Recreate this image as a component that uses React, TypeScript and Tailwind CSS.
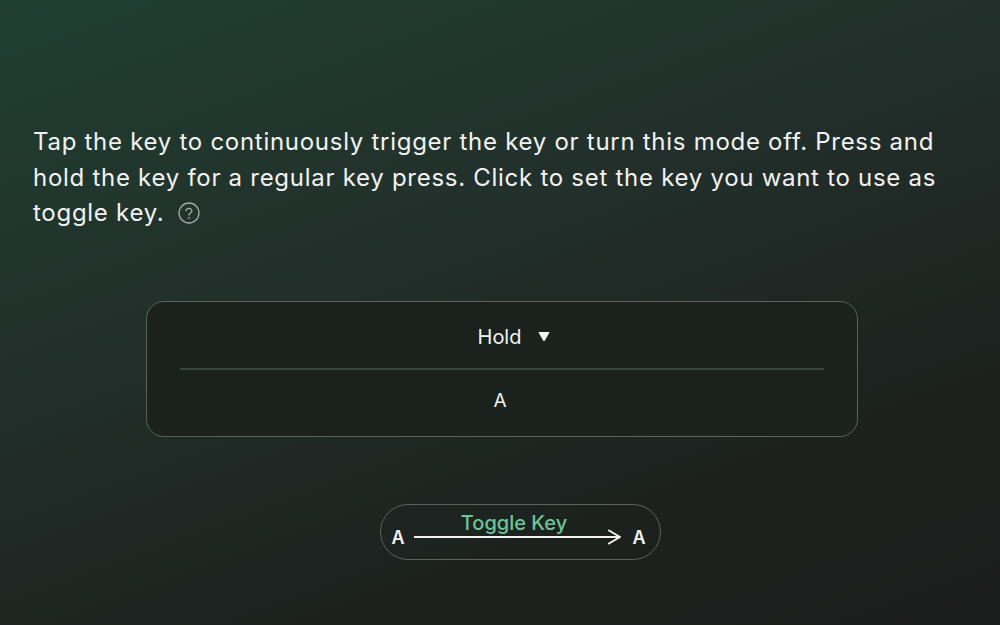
import React from "react";

function HelpIcon() {
  return (
    <svg width="22" height="22" viewBox="0 0 22 22" fill="none" className="ml-[14px] inline-block align-[-3px]" aria-hidden>
      <circle cx="11" cy="11" r="10" stroke="#a3aaa6" strokeWidth="1.3" />
      <path d="M8 8.6a3 3 0 0 1 5.9.4c0 1.9-2.9 2.1-2.9 4.1" stroke="#a3aaa6" strokeWidth="1.3" strokeLinecap="round" />
      <circle cx="11" cy="15.9" r="0.9" fill="#a3aaa6" />
    </svg>
  );
}

export default function App() {
  return (
    <div
      className="h-[625px] w-[1000px] overflow-hidden bg-[linear-gradient(160deg,#1f3f31_0%,#222f2a_40%,#1c211e_75%,#1b1e1c_100%)] font-['Inter',sans-serif] text-[#f2f2f2]"
    >
      <p className="whitespace-nowrap px-[33px] pt-[124px] text-[24px] leading-[35.5px] tracking-[0.72px]">
        Tap the key to continuously trigger the key or turn this mode off. Press and
        <br />
        hold the key for a regular key press. Click to set the key you want to use as
        <br />
        toggle key.
        <HelpIcon />
      </p>

      <div className="mt-[70px] ml-[146px] flex h-[136px] w-[712px] flex-col items-center rounded-[18px] border-[1.5px] border-[#5b615d] bg-[#1b221e]">
        <div className="flex h-[66px] items-center gap-[17px] pt-[4px] pl-[24px] text-[20px]">
          <span>Hold</span>
          <svg width="12" height="11" viewBox="0 0 12 11" aria-hidden>
            <path d="M1 1.5h10L6 10z" fill="#f2f2f2" stroke="#f2f2f2" strokeLinejoin="round" />
          </svg>
        </div>
        <div className="h-[2px] w-[644px] bg-[#3a4640]" />
        <div className="flex h-[64px] items-center pr-[4px] text-[19px]">A</div>
      </div>

      <div className="mt-[67px] ml-[380px] flex h-[56px] w-[281px] items-center rounded-full border-[1.5px] border-[#5b615d] pl-[9px]">
        <span className="w-[16px] pt-[12px] text-center text-[18px] font-semibold">A</span>
        <div className="relative ml-[8px] h-full w-[208px]">
          <span className="absolute top-[3px] left-0 w-[200px] text-center text-[20px] font-medium text-[#6cc499]">Toggle Key</span>
          <svg className="absolute top-[23px] left-0" width="210" height="18" viewBox="0 0 210 18" aria-hidden>
            <path d="M0 9h206M195 2.5l11 6.5-11 6.5" stroke="#f2f2f2" strokeWidth="2" fill="none" strokeLinecap="round" strokeLinejoin="round" />
          </svg>
        </div>
        <span className="ml-[9px] w-[16px] pt-[12px] text-center text-[18px] font-semibold">A</span>
      </div>
    </div>
  );
}
